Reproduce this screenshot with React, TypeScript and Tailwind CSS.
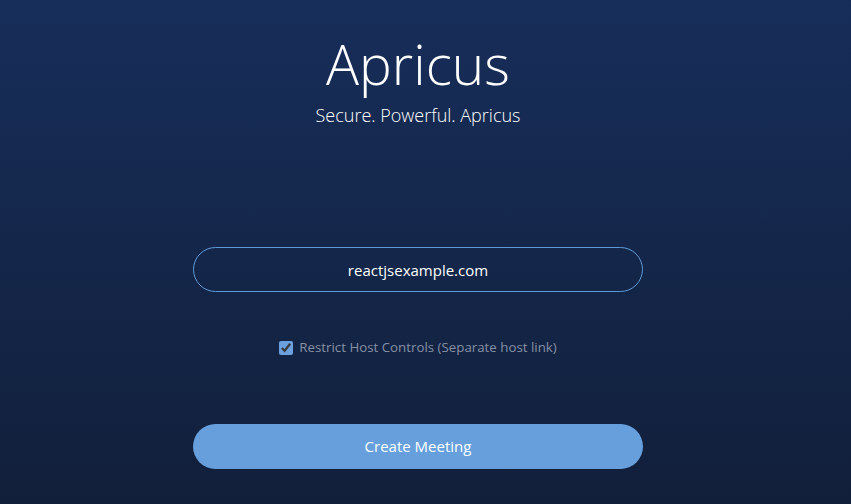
import React, { useState } from 'react';

const App: React.FC = () => {
  const [name, setName] = useState('reactjsexample.com');
  const [restrict, setRestrict] = useState(true);

  return (
    <div
      className="w-[851px] h-[504px] pr-[15px] flex flex-col items-center bg-gradient-to-b from-[#172e5a] to-[#111f3a] text-white"
      style={{ fontFamily: '"Open Sans", "Noto Sans", sans-serif' }}
    >
      <h1 className="mt-[28px] text-[55px] font-light leading-[72px]">Apricus</h1>
      <p className="mt-[2px] text-[18px] font-light leading-[26px]">Secure. Powerful. Apricus</p>

      <input
        type="text"
        value={name}
        onChange={(e) => setName(e.target.value)}
        className="mt-[119px] w-[450px] h-[45px] rounded-full border border-[#5e9ad8] bg-transparent text-center text-[15px] text-white outline-none"
      />

      <label className="mt-[46px] flex items-center gap-[6px] text-[13.3px] text-[#8690a4] cursor-pointer">
        <input
          type="checkbox"
          checked={restrict}
          onChange={() => setRestrict(!restrict)}
          className="w-[14px] h-[14px] accent-[#6aa0de]"
        />
        Restrict Host Controls (Separate host link)
      </label>

      <button
        type="button"
        className="mt-[66px] w-[450px] h-[45px] rounded-full bg-[#669fdc] text-[15px] text-white"
      >
        Create Meeting
      </button>
    </div>
  );
};

export default App;
